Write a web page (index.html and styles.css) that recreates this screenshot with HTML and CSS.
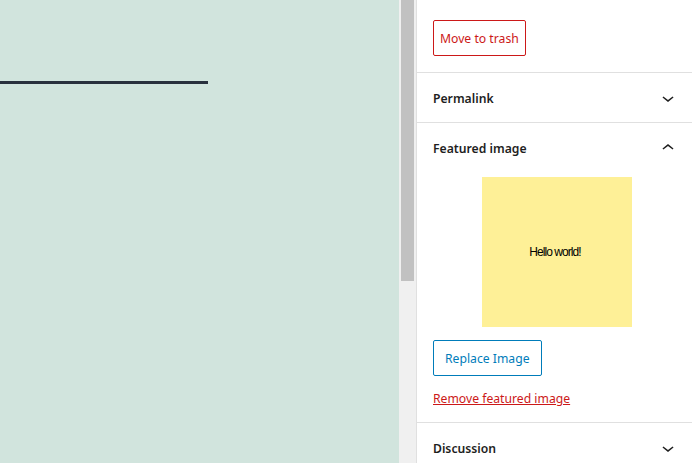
FILE: index.html
```html
<!DOCTYPE html>
<html lang="en">
<head>
    <meta charset="UTF-8">
    <meta name="viewport" content="width=device-width, initial-scale=1.0">
    <title>Editor - Featured image</title>
    <link rel="stylesheet" href="styles.css">
</head>
<body>

<div class="editor">
    <!-- Canvas do post -->
    <div class="canvas">
        <div class="separator"></div>
    </div>

    <div class="scrollbar">
        <div class="thumb"></div>
    </div>

    <!-- Sidebar de configuracoes -->
    <div class="sidebar">
        <div class="top-section">
            <button class="btn btn-danger">Move to trash</button>
        </div>

        <div class="panel">
            <div class="panel-header">
                <span>Permalink</span>
                <svg class="chevron" viewBox="0 0 24 24" width="24" height="24"><path d="M17.5 11.6L12 16l-5.5-4.4.9-1.2L12 14l4.6-3.6 1 1.2z"/></svg>
            </div>
        </div>

        <div class="panel open">
            <div class="panel-header">
                <span>Featured image</span>
                <svg class="chevron" viewBox="0 0 24 24" width="24" height="24"><path d="M6.5 12.4L12 8l5.5 4.4-.9 1.2L12 10l-4.6 3.6-1-1.2z"/></svg>
            </div>
            <div class="panel-body">
                <div class="featured">
                    <span>Hello world!</span>
                </div>
                <button class="btn btn-secondary">Replace Image</button>
                <a href="#" class="remove-link">Remove featured image</a>
            </div>
        </div>

        <div class="panel">
            <div class="panel-header">
                <span>Discussion</span>
                <svg class="chevron" viewBox="0 0 24 24" width="24" height="24"><path d="M17.5 11.6L12 16l-5.5-4.4.9-1.2L12 14l4.6-3.6 1 1.2z"/></svg>
            </div>
        </div>
    </div>
</div>

</body>
</html>
```

FILE: styles.css
```css
body {
    margin: 0;
    padding: 0;
    font-family: "Noto Sans", Arial, sans-serif;
    font-size: 12.2px;
    color: #1e1e1e;
    background-color: #fff;
    overflow: hidden;
}
.editor {
    display: flex;
    height: 463px;
}
.canvas {
    width: 399px;
    flex-shrink: 0;
    background-color: #d1e4dd;
    padding-top: 81px;
    box-sizing: border-box;
}
.separator {
    width: 208px;
    height: 3px;
    background-color: #28303d;
}
.scrollbar {
    width: 18px;
    flex-shrink: 0;
    background-color: #f0f0f0;
    border-right: 1px solid #e0e0e0;
    box-sizing: border-box;
    padding-left: 2px;
}
.thumb {
    width: 13px;
    height: 281px;
    background-color: #c1c1c1;
}
.sidebar {
    flex: 1;
    background-color: #fff;
}
.top-section {
    padding: 20px 16px 16px;
    border-bottom: 1px solid #e0e0e0;
}
.btn {
    display: block;
    height: 36px;
    font-family: inherit;
    font-size: 12.2px;
    background: #fff;
    border-radius: 2px;
    cursor: pointer;
}
.btn-danger {
    padding: 0 6px;
    color: #cc1818;
    border: 1px solid #cc1818;
}
.btn-secondary {
    padding: 0 11px;
    color: #007cba;
    border: 1px solid #007cba;
    margin-top: 13px;
}
.panel {
    border-bottom: 1px solid #e0e0e0;
}
.panel-header {
    position: relative;
    height: 49px;
    display: flex;
    align-items: center;
    padding: 1px 16px 0;
    box-sizing: border-box;
    font-weight: 600;
}
.chevron {
    position: absolute;
    right: 12px;
    top: 13px;
    fill: #1e1e1e;
}
.open .panel-header {
    height: 50px;
}
.panel-body {
    padding: 4px 16px 13px;
}
.featured {
    width: 150px;
    height: 150px;
    margin-left: 49px;
    background-color: #fef097;
    display: flex;
    align-items: center;
    justify-content: center;
}
.featured span {
    font-family: "Liberation Sans", Arial, sans-serif;
    font-size: 12px;
    letter-spacing: -0.95px;
    margin-left: -4px;
    color: #000;
}
.remove-link {
    display: block;
    margin-top: 13px;
    line-height: 20px;
    color: #cc1818;
}
```
